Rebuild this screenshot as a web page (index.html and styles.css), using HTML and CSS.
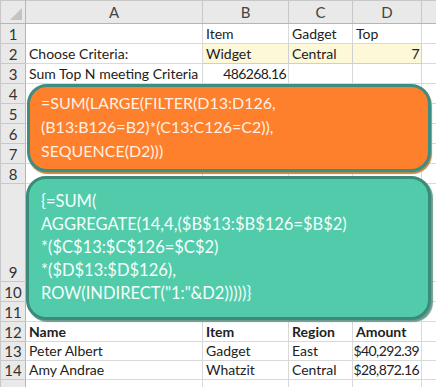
FILE: index.html
```html
<!DOCTYPE html>
<html lang="en">
<head>
    <meta charset="UTF-8">
    <title>Sum Top N meeting Criteria</title>
    <link rel="stylesheet" href="styles.css">
</head>
<body>

<div class="sheet-wrap">
    <table class="sheet">
        <colgroup>
            <col class="c-rowhead">
            <col class="c-a">
            <col class="c-b">
            <col class="c-c">
            <col class="c-d">
            <col class="c-e">
        </colgroup>
        <tr class="colheads">
            <th class="corner"><span class="corner-tri"></span></th>
            <th>A</th><th>B</th><th>C</th><th>D</th><th></th>
        </tr>
        <tr>
            <th>1</th><td></td><td>Item</td><td>Gadget</td><td>Top</td><td></td>
        </tr>
        <tr>
            <th>2</th><td>Choose Criteria:</td><td class="input">Widget</td><td class="input">Central</td><td class="input num">7</td><td></td>
        </tr>
        <tr>
            <th>3</th><td>Sum Top N meeting Criteria</td><td class="num">486268.16</td><td></td><td></td><td></td>
        </tr>
        <tr><th>4</th><td></td><td></td><td></td><td></td><td></td></tr>
        <tr><th>5</th><td></td><td></td><td></td><td></td><td></td></tr>
        <tr><th>6</th><td></td><td></td><td></td><td></td><td></td></tr>
        <tr><th>7</th><td></td><td></td><td></td><td></td><td></td></tr>
        <tr><th>8</th><td></td><td></td><td></td><td></td><td></td></tr>
        <tr class="tall"><th>9</th><td></td><td></td><td></td><td></td><td></td></tr>
        <tr><th>10</th><td></td><td></td><td></td><td></td><td></td></tr>
        <tr><th>11</th><td></td><td></td><td></td><td></td><td></td></tr>
        <tr class="head-row">
            <th>12</th><td>Name</td><td>Item</td><td>Region</td><td>Amount</td><td></td>
        </tr>
        <tr class="short">
            <th>13</th><td>Peter Albert</td><td>Gadget</td><td>East</td><td class="num">$40,292.39</td><td></td>
        </tr>
        <tr class="short">
            <th>14</th><td>Amy Andrae</td><td>Whatzit</td><td>Central</td><td class="num">$28,872.16</td><td></td>
        </tr>
        <!-- row 15 only peeks in at the bottom edge -->
        <tr><th></th><td></td><td></td><td></td><td></td><td></td></tr>
    </table>

    <!-- formula callouts sit over the grid -->
    <div class="callout orange">
        =SUM(LARGE(FILTER(D13:D126,<br>
        (B13:B126=B2)*(C13:C126=C2)),<br>
        SEQUENCE(D2)))
    </div>
    <div class="callout teal">
        {=SUM(<br>
        AGGREGATE(14,4,($B$13:$B$126=$B$2)<br>
        *($C$13:$C$126=$C$2)<br>
        *($D$13:$D$126),<br>
        ROW(INDIRECT("1:"&amp;D2)))))}
    </div>
</div>

</body>
</html>
```

FILE: styles.css
```css
body {
    margin: 0;
    padding: 0;
    background-color: white;
    font-family: Lato, "Open Sans", sans-serif;
}

.sheet-wrap {
    position: relative;
    width: 436px;
    height: 387px;
    overflow: hidden;
}

.sheet {
    border-collapse: collapse;
    table-layout: fixed;
    width: 436px;
    font-size: 14px;
    color: #222;
}

.c-rowhead { width: 25px; }
.c-a { width: 177px; }
.c-b { width: 86px; }
.c-c { width: 64px; }
.c-d { width: 69px; }
.c-e { width: 15px; }

.sheet tr {
    height: 20px;
}

.sheet tr.colheads {
    height: 23px;
}

.sheet tr.tall {
    height: 98px;
}

.sheet tr.short {
    height: 19px;
}

.sheet td,
.sheet th {
    border: 1px solid #d9d9d9;
    padding: 0 3px;
    white-space: nowrap;
    overflow: hidden;
    vertical-align: bottom;
    text-align: left;
    font-weight: normal;
    line-height: 18px;
}

.sheet th {
    background-color: #e9e9e9;
    border-color: #c8c8c8;
    color: #333;
    text-align: center;
    padding: 0;
    font-size: 15px;
}

.colheads th {
    vertical-align: middle;
    color: #444;
    border-bottom-color: #b5b5b5;
}

.sheet tr th:first-child {
    border-right-color: #b5b5b5;
}

.corner {
    position: relative;
}

.corner-tri {
    position: absolute;
    right: 3px;
    bottom: 3px;
    width: 0;
    height: 0;
    border-left: 12px solid transparent;
    border-bottom: 12px solid #c3c3c3;
}

.sheet td.input {
    background-color: #fdf8d8;
    border-color: #cfcfcf;
}

.sheet td.num {
    text-align: right;
    padding: 0 2px 0 0;
    letter-spacing: -0.6px;
}

.head-row td {
    font-weight: bold;
}

.callout {
    position: absolute;
    box-sizing: border-box;
    border: 3px solid #3c8f80;
    border-radius: 20px;
    white-space: nowrap;
}

.orange {
    left: 27px;
    top: 84px;
    width: 404px;
    height: 88px;
    padding: 4px 11px;
    font-size: 16px;
    line-height: 24px;
    background-color: #fe7f2c;
    color: #fff1e3;
    box-shadow: 1px 2px 1px #b98a4a;
}

.teal {
    left: 26px;
    top: 176px;
    width: 405px;
    height: 144px;
    padding: 11px 12px;
    font-size: 16.5px;
    line-height: 23px;
    background-color: #52cbab;
    color: #f4fffb;
    border-color: #3b8a7a;
    box-shadow: 2px 2px 1px #6f9a90;
}
```
